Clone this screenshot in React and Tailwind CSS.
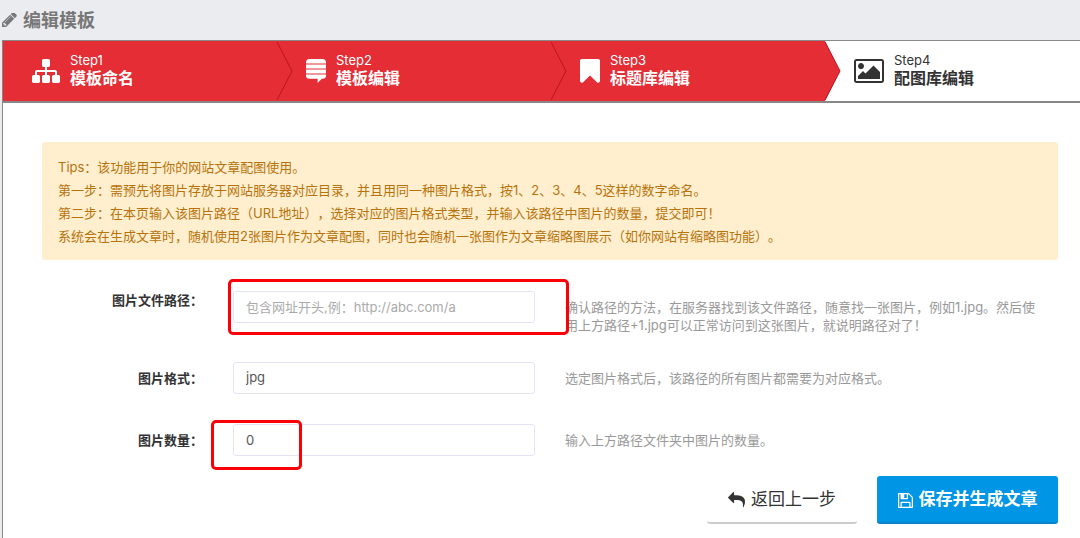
import React from "react";

const PATHS = {
  sitemap:
    "M1792 1248v320q0 40-28 68t-68 28h-320q-40 0-68-28t-28-68v-320q0-40 28-68t68-28h96v-192h-512v192h96q40 0 68 28t28 68v320q0 40-28 68t-68 28h-320q-40 0-68-28t-28-68v-320q0-40 28-68t68-28h96v-192h-512v192h96q40 0 68 28t28 68v320q0 40-28 68t-68 28h-320q-40 0-68-28t-28-68v-320q0-40 28-68t68-28h96v-192q0-52 38-90t90-38h512v-192h-96q-40 0-68-28t-28-68v-320q0-40 28-68t68-28h320q40 0 68 28t28 68v320q0 40-28 68t-68 28h-96v192h512q52 0 90 38t38 90v192h96q40 0 68 28t28 68z",
  stack:
    "M0 4.5V3.6Q0 0 3.6 0h12.8Q20 0 20 3.600v.9zM0 5.500h20v3.900H0zM0 10.500h20v3.900H0zM0 15.400h20v1.200q0 3.200-3.400 3.200h-.8L11.600 24v-4.200H3.400Q0 19.800 0 16.600z",
  bookmark:
    "M1420 128q23 0 44 9 33 13 52.500 41t19.500 62v1289q0 34-19.500 62t-52.500 41q-19 8-44 8-48 0-83-32l-441-424-441 424q-36 33-83 33-23 0-44-9-33-13-52.500-41t-19.500-62v-1289q0-34 19.500-62t52.500-41q21-9 44-9h1048z",
  picture:
    "M576 576q0 80-56 136t-136 56-136-56-56-136 56-136 136-56 136 56 56 136zm1024 384v448h-1408v-192l320-320 160 160 512-512zm96-704h-1600q-13 0-22.500 9.500t-9.500 22.500v1216q0 13 9.500 22.500t22.500 9.500h1600q13 0 22.500-9.500t9.500-22.500v-1216q0-13-9.500-22.500t-22.500-9.500zm160 32v1216q0 66-47 113t-113 47h-1600q-66 0-113-47t-47-113v-1216q0-66 47-113t113-47h1600q66 0 113 47t47 113z",
  pencil:
    "M491 1536l91-91-235-235-91 91v107h128v128h107zm523-928q0-22-22-22-10 0-17 7l-542 542q-7 7-7 17 0 22 22 22 10 0 17-7l542-542q7-7 7-17zm-54-192l416 416-832 832h-416v-416zm683 96q0 53-37 90l-166 166-416-416 166-165q36-38 90-38 53 0 91 38l235 234q37 39 37 91z",
  floppy:
    "M512 1536h768v-384h-768v384zm896 0h128v-896q0-14-10-38.500t-20-34.500l-281-281q-10-10-34-20t-39-10v416q0 40-28 68t-68 28h-576q-40 0-68-28t-28-68v-416h-128v1280h128v-416q0-40 28-68t68-28h832q40 0 68 28t28 68v416zm-384-928v-320q0-13-9.500-22.500t-22.500-9.500h-192q-13 0-22.500 9.500t-9.500 22.500v320q0 13 9.500 22.500t22.500 9.500h192q13 0 22.500-9.500t9.500-22.500zm640 32v928q0 40-28 68t-68 28h-1344q-40 0-68-28t-28-68v-1344q0-40 28-68t68-28h928q40 0 88 20t76 48l280 280q28 28 48 76t20 88z",
  reply:
    "M1792 1120q0 166-127 451-3 7-10.500 24t-13.500 30-13 22q-12 17-28 17-15 0-23.500-10t-8.500-25q0-9 2.500-26.500t2.500-23.500q5-68 5-123 0-101-17.500-181t-48.500-138.500-80-101-105.500-69.500-133-42.500-154-21.500-175.500-6h-224v256q0 26-19 45t-45 19-45-19l-512-512q-19-19-19-45t19-45l512-512q19-19 45-19t45 19 19 45v256h224q713 0 875 403 53 134 53 333z",
};

function Icon({ name, box, className }) {
  return (
    <svg viewBox={box} className={className} fill="currentColor" aria-hidden="true">
      <path d={PATHS[name]} />
    </svg>
  );
}

const STEPS = [
  { label: "Step1", title: "模板命名", icon: "sitemap", box: "0 128 1792 1536", size: "w-7 h-6" },
  { label: "Step2", title: "模板编辑", icon: "stack", box: "0 0 20 24", size: "w-5 h-6" },
  { label: "Step3", title: "标题库编辑", icon: "bookmark", box: "256 128 1280 1536", size: "w-5 h-6" },
  { label: "Step4", title: "配图库编辑", icon: "picture", box: "-64 128 1920 1536", size: "w-[30px] h-6", current: true },
];

const TIPS = [
  "Tips：该功能用于你的网站文章配图使用。",
  "第一步：需预先将图片存放于网站服务器对应目录，并且用同一种图片格式，按1、2、3、4、5这样的数字命名。",
  "第二步：在本页输入该图片路径（URL地址），选择对应的图片格式类型，并输入该路径中图片的数量，提交即可！",
  "系统会在生成文章时，随机使用2张图片作为文章配图，同时也会随机一张图作为文章缩略图展示（如你网站有缩略图功能）。",
];

const INPUT =
  "block w-full h-8 rounded-[3px] border border-[#e4e4f5] bg-white px-3 text-[13px] text-[#555] placeholder:text-[#aaa] outline-none";

function Step({ step, last }) {
  return (
    <li
      className={`relative flex min-w-0 items-center gap-[10px] pl-[29px] ${
        step.current ? "bg-white text-[#333]" : "bg-[#e42d35] text-white"
      }`}
    >
      <Icon name={step.icon} box={step.box} className={`${step.size} shrink-0`} />
      <div className="pb-[2px]">
        <div className="text-[13px] leading-4">{step.label}</div>
        <div className="text-base leading-5 font-bold">{step.title}</div>
      </div>
      {!last && (
        <svg viewBox="0 0 16 60" className="absolute top-0 left-full z-10 h-full w-4" preserveAspectRatio="none" aria-hidden="true">
          <path d="M0 0L15 30L0 60z" fill="#e42d35" />
          <path d="M0 1L15 30L0 59" fill="none" stroke="#b9161e" strokeWidth="1" />
        </svg>
      )}
    </li>
  );
}

function Row({ id, label, help, tall, children }) {
  return (
    <div className="grid grid-cols-[191px_302px_1fr] items-start">
      <label
        htmlFor={id}
        className={`pr-[30px] text-right text-[13px] leading-[18px] font-bold whitespace-nowrap text-[#333] ${tall ? "" : "pt-[7px]"}`}
      >
        {label}
      </label>
      <div className="relative">{children}</div>
      <p className="pt-[7px] pr-5 pl-[30px] text-[13px] leading-[18px] text-[#999]">{help}</p>
    </div>
  );
}

export default function App() {
  return (
    <div className="min-h-screen bg-[#ebecf0] pl-[2px] font-[Inter,'Noto_Sans_CJK_SC',sans-serif] [text-spacing-trim:space-all]">
      <h1 className="flex h-10 items-center gap-[6px] text-[18px] font-bold text-[#777]">
        <Icon name="pencil" box="128 256 1536 1408" className="h-[14px] w-[15px]" />
        编辑模板
      </h1>
      <main className="min-h-[498px] border-t border-l border-[#888] bg-white">
        <ol className="grid h-[62px] grid-cols-[274px_274px_274px_1fr] border-b-2 border-[#888]">
          {STEPS.map((s, i) => (
            <Step key={s.label} step={s} last={i === STEPS.length - 1} />
          ))}
        </ol>

        <div className="pt-[39px] pr-[22px] pl-[39px]">
          <div className="rounded-[3px] bg-[#ffefcf] px-4 pt-[14px] pb-3 text-[13px] leading-[23px] text-[#b8720a]">
            {TIPS.map((t) => (
              <p key={t}>{t}</p>
            ))}
          </div>

          <form className="pt-[31px]" onSubmit={(e) => e.preventDefault()}>
            <Row
              id="path"
              tall
              label="图片文件路径："
              help="确认路径的方法，在服务器找到该文件路径，随意找一张图片，例如1.jpg。然后使用上方路径+1.jpg可以正常访问到这张图片，就说明路径对了！"
            >
              <input id="path" className={INPUT} placeholder="包含网址开头,例：http://abc.com/a" />
              <span className="pointer-events-none absolute -top-3 -right-[34px] -bottom-3 -left-[5px] rounded-[5px] border-3 border-[#fb0007]" />
            </Row>
            <div className="pt-7">
              <Row id="format" label="图片格式：" help="选定图片格式后，该路径的所有图片都需要为对应格式。">
                <select id="format" defaultValue="jpg" className={`${INPUT} appearance-none`}>
                  <option>jpg</option>
                </select>
              </Row>
            </div>
            <div className="pt-[30px]">
              <Row id="count" label="图片数量：" help="输入上方路径文件夹中图片的数量。">
                <input id="count" className={INPUT} defaultValue="0" />
                <span className="pointer-events-none absolute -top-1 -bottom-[14px] -left-[22px] w-[91px] rounded-[5px] border-3 border-[#fb0007]" />
              </Row>
            </div>
            <div className="flex justify-end gap-5 pt-5">
              <button type="button" className="flex h-12 w-[150px] items-center justify-center gap-[6px] rounded-[3px] border-b-2 border-[#ccc] bg-white pt-[2px] text-[17px] text-[#333]">
                <Icon name="reply" box="0 128 1792 1536" className="h-4 w-[17px]" />
                返回上一步
              </button>
              <button type="submit" className="flex h-12 w-[181px] items-center justify-center gap-[6px] rounded-[3px] border-b-2 border-[#0784c9] bg-[#0095e5] pt-[2px] text-[17px] font-bold text-white">
                <Icon name="floppy" box="128 128 1536 1536" className="h-[15px] w-[15px]" />
                保存并生成文章
              </button>
            </div>
          </form>
        </div>
      </main>
    </div>
  );
}
